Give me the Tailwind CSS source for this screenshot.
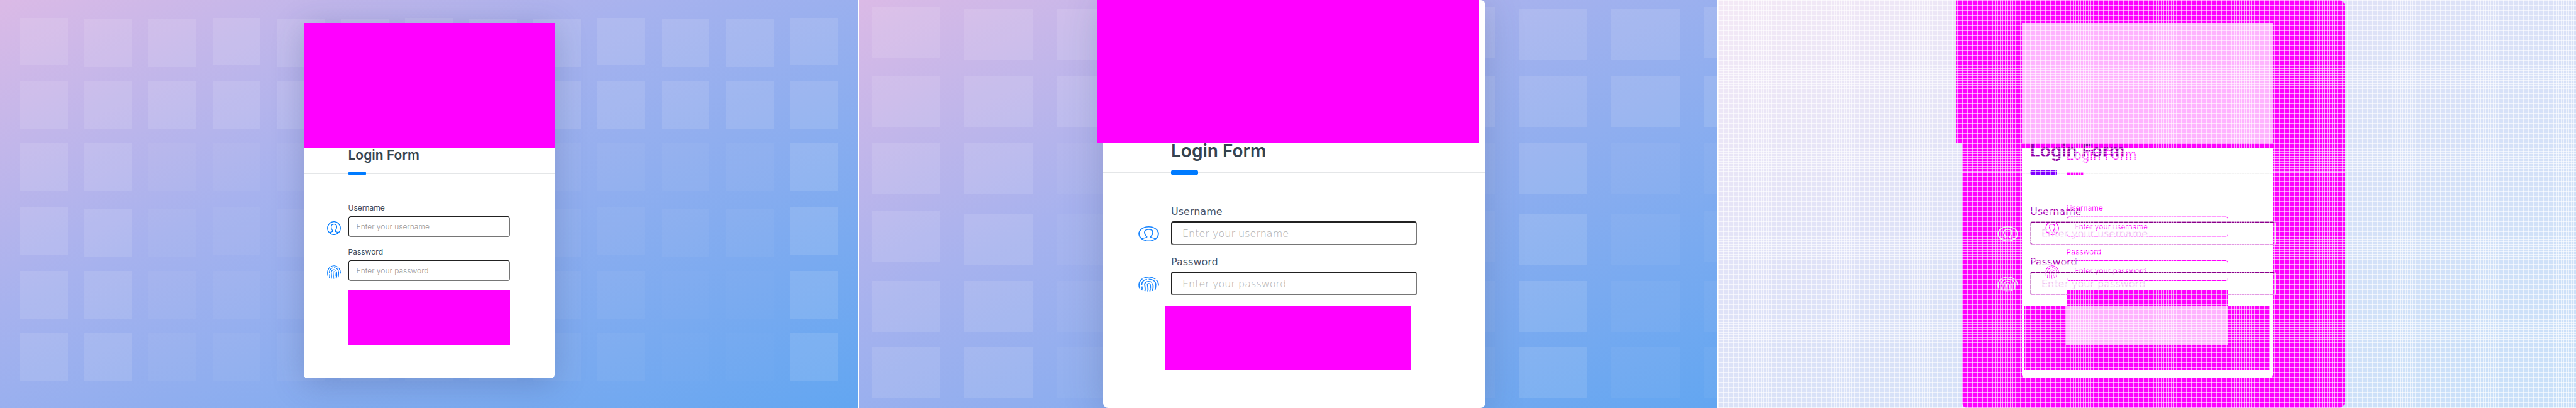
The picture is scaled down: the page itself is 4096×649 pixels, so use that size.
<!DOCTYPE html>
<html lang="en">
<head>
<meta charset="utf-8">
<title>Login Form comparison</title>
<script src="https://cdn.jsdelivr.net/npm/@tailwindcss/browser@4"></script>
</head>
<body class="bg-white font-['Inter',sans-serif]">
<svg class="hidden" aria-hidden="true">
  <symbol id="user" viewBox="0 0 30 30" preserveAspectRatio="none">
    <g fill="none" stroke="currentColor" stroke-width="1.7">
      <circle cx="15" cy="15" r="14"/>
      <path d="M5 24.8C8 22.6 12.4 23 12.4 21.4C12.4 19.8 9 18.5 9 12.2C9 8.2 11.4 6.2 15 6.2S21 8.2 21 12.2C21 18.5 17.6 19.8 17.6 21.4C17.6 23 22 22.6 25 24.8"/>
    </g>
  </symbol>
  <symbol id="finger" viewBox="0 0 30 30" preserveAspectRatio="none">
    <g fill="none" stroke="currentColor" stroke-width="1.6">
      <path d="M1.800 23C.2 16 .8 9 6 4.400"/>
      <path d="M8 3C13-.2 20 .4 24.600 5"/>
      <path d="M26 7C28.600 10 29.400 13 29 18"/>
      <path d="M5 17.500C4.600 11 7.500 6.800 12.500 5.600"/>
      <path d="M15 5.200C21.500 5.200 25.300 10 25.200 16C25.200 20 25 23 24.200 26"/>
      <path d="M5.300 19.600C5.700 22.500 5.600 25 5 27.500"/>
      <path d="M9.500 29C10.600 25 9.500 20 9.200 16C9 12 11.500 9.600 15 9.600C17 9.600 18.500 10.300 19.500 11.600"/>
      <path d="M20.600 13.400C21.600 18 21.600 24 20 28.600"/>
      <path d="M13.600 29.400C14.600 25 13.600 20 13.200 16.500C13 13 17 12.700 17.200 16C17.500 18.500 17.700 21 17.500 23.500"/>
      <path d="M17.300 25L16.700 29.400"/>
    </g>
  </symbol>
</svg>

<main class="grid h-screen grid-cols-3 gap-[2px]">

  <!-- First version -->
  <section class="relative flex items-start justify-center overflow-hidden bg-[linear-gradient(to_bottom_right,#dbbae6,#a7b2ee_38%,#62a6f1)] pt-9">
    <div data-tiles="13" class="absolute inset-0 grid grid-cols-[repeat(13,76px)] grid-rows-[101px_99px_102px_101px_99px_76px] gap-x-[26px] pt-7 pl-8"></div>
    <form class="relative w-[399px] rounded-b-md bg-white pb-[54px] shadow-[0_8px_50px_rgba(50,60,110,0.25)]">
      <div class="h-[199px] bg-[#ff00ff]"></div>
      <header class="relative border-b border-[#e4e6e8] pb-4 pl-[71px]">
        <h1 class="text-[21px] leading-6 font-semibold text-[#35434f]">Login Form</h1>
        <span class="absolute -bottom-1 h-1.5 w-7 rounded-xs bg-[#007bff]"></span>
      </header>
      <div class="flex flex-col gap-4 pt-[47px] pr-[71px] pl-[37px]">
        <div class="grid grid-cols-[22px_1fr] gap-x-3 gap-y-[5px]">
          <label for="u1" class="col-start-2 text-xs leading-4 text-[#404b5e]">Username</label>
          <svg class="col-start-1 mt-2 size-[22px] text-[#007bff]"><use href="#user"/></svg>
          <input id="u1" type="text" placeholder="Enter your username" class="h-[33px] w-full rounded border border-t-[#212121] border-r-[#767676] border-b-[#767676] border-l-[#212121] px-3 text-xs font-light placeholder:text-[#999]">
        </div>
        <div class="grid grid-cols-[22px_1fr] gap-x-3 gap-y-[5px]">
          <label for="p1" class="col-start-2 text-xs leading-4 text-[#404b5e]">Password</label>
          <svg class="col-start-1 mt-2 size-[22px] text-[#007bff]"><use href="#finger"/></svg>
          <input id="p1" type="password" placeholder="Enter your password" class="h-[33px] w-full rounded border border-t-[#212121] border-r-[#767676] border-b-[#767676] border-l-[#212121] px-3 text-xs font-light placeholder:text-[#999]">
        </div>
      </div>
      <div class="mx-[71px] mt-3.5 h-[87px] bg-[#ff00ff]"></div>
    </form>
  </section>

  <!-- Second version -->
  <section class="relative flex items-stretch justify-center overflow-hidden bg-[linear-gradient(to_bottom_right,#dbbae6,#a7b2ee_38%,#62a6f1)] pl-5">
    <div data-tiles="10" class="absolute inset-0 grid grid-cols-[repeat(10,109px)] grid-rows-[110px_106px_109px_111px_105px_81px] gap-x-[38px] pt-[11px] pl-5"></div>
    <form class="relative w-[608px] rounded-lg bg-white font-['DejaVu_Sans',sans-serif] shadow-[0_8px_60px_rgba(50,60,110,0.25)]">
      <div class="mr-2.5 -ml-2.5 h-[228px] bg-[#ff00ff]"></div>
      <header class="relative border-b border-[#e4e6e8] pb-[22px] pl-[108px]">
        <h1 class="font-['Inter',sans-serif] text-[28px] leading-6 font-semibold text-[#35434f]">Login Form</h1>
        <span class="absolute -bottom-1 h-[7px] w-[43px] rounded-xs bg-[#007bff]"></span>
      </header>
      <div class="flex flex-col gap-[17px] pt-[52px] pr-[109px] pl-14">
        <div class="grid grid-cols-[33px_1fr] gap-x-[19px] gap-y-[5px]">
          <label for="u2" class="col-start-2 text-base leading-5 text-[#4a5568]">Username</label>
          <svg class="col-start-1 mt-2 h-6 w-[33px] text-[#1a86ff]"><use href="#user"/></svg>
          <input id="u2" type="text" placeholder="Enter your username" class="h-[38px] w-full rounded border-2 border-t-[#212121] border-r-[#767676] border-b-[#767676] border-l-[#212121] px-4 text-base font-light placeholder:text-[#b0b0b0]">
        </div>
        <div class="grid grid-cols-[33px_1fr] gap-x-[19px] gap-y-[5px]">
          <label for="p2" class="col-start-2 text-base leading-5 text-[#4a5568]">Password</label>
          <svg class="col-start-1 mt-2 h-6 w-[33px] text-[#1a86ff]"><use href="#finger"/></svg>
          <input id="p2" type="password" placeholder="Enter your password" class="h-[38px] w-full rounded border-2 border-t-[#212121] border-r-[#767676] border-b-[#767676] border-l-[#212121] px-4 text-base font-light placeholder:text-[#b0b0b0]">
        </div>
      </div>
      <div class="mt-[17px] mr-[119px] ml-[98px] h-[101px] bg-[#ff00ff]"></div>
    </form>
  </section>

  <!-- Difference of the two versions -->
  <section class="relative overflow-hidden bg-[linear-gradient(to_bottom_right,#f4e9f6,#dfe2f7_38%,#c8e0f9)]">
    <div class="absolute inset-0 flex justify-center pl-5">
      <div class="w-[608px] rounded-lg bg-[#ff00ff]">
        <div class="mr-2.5 -ml-2.5 h-[228px] border-r border-b border-[#ffb3ff] bg-[#ff00ff]"></div>
      </div>
    </div>

    <div class="absolute inset-0 flex items-start justify-center pt-9">
      <form class="w-[399px] rounded-b-md bg-white pb-[54px]">
        <div class="h-48 bg-[#ffb3ff]"></div>
        <div class="h-[7px] bg-[#ff00ff]"></div>
        <header class="relative border-b border-[#f3f3f3] pb-4 pl-[71px]">
          <h2 class="text-[21px] leading-6 text-[#ff00ff]">Login Form</h2>
          <span class="absolute -bottom-1 h-1.5 w-7 bg-[#ff00ff]"></span>
        </header>
        <div class="flex flex-col gap-4 pt-[47px] pr-[71px] pl-[37px]">
          <div class="grid grid-cols-[22px_1fr] gap-x-3 gap-y-[5px]">
            <label for="u3" class="col-start-2 text-xs leading-4 text-[#ff00ff]">Username</label>
            <svg class="col-start-1 mt-2 size-[22px] text-[#ff00ff]"><use href="#user"/></svg>
            <input id="u3" type="text" placeholder="Enter your username" class="h-[33px] w-full rounded border border-[#ff00ff] px-3 text-xs font-light placeholder:text-[#ff00ff]">
          </div>
          <div class="grid grid-cols-[22px_1fr] gap-x-3 gap-y-[5px]">
            <label for="p3" class="col-start-2 text-xs leading-4 text-[#ff00ff]">Password</label>
            <svg class="col-start-1 mt-2 size-[22px] text-[#ff00ff]"><use href="#finger"/></svg>
            <input id="p3" type="password" placeholder="Enter your password" class="h-[33px] w-full rounded border border-[#ff00ff] px-3 text-xs font-light placeholder:text-[#ff00ff]">
          </div>
        </div>
        <div class="mx-[71px] mt-3.5 h-[87px] bg-[#ff00ff]"></div>
      </form>
    </div>

    <div class="absolute inset-0 flex justify-center pl-5">
      <form class="w-[608px] pt-[228px] font-['DejaVu_Sans',sans-serif]">
        <header class="relative border-b border-white/60 pb-[22px] pl-[108px]">
          <h2 class="font-['Inter',sans-serif] text-[28px] leading-6 font-semibold text-[#9000a8]">Login Form</h2>
          <span class="absolute -bottom-1 h-[7px] w-[43px] rounded-xs bg-[#8000ff]"></span>
        </header>
        <div class="flex flex-col gap-[17px] pt-[52px] pr-[109px] pl-14">
          <div class="grid grid-cols-[33px_1fr] gap-x-[19px] gap-y-[5px]">
            <label for="u4" class="col-start-2 text-base leading-5 text-[#a800b0]">Username</label>
            <svg class="col-start-1 mt-2 h-6 w-[33px] text-[#e6e4ee]"><use href="#user"/></svg>
            <input id="u4" type="text" placeholder="Enter your username" class="h-[38px] w-full rounded border-2 border-t-[#8b008b] border-r-[#e8e8e8] border-b-[#b800b8] border-l-[#8b008b] px-4 text-base placeholder:text-[#f0c4f2]">
          </div>
          <div class="grid grid-cols-[33px_1fr] gap-x-[19px] gap-y-[5px]">
            <label for="p4" class="col-start-2 text-base leading-5 text-[#a800b0]">Password</label>
            <svg class="col-start-1 mt-2 h-6 w-[33px] text-[#e6e4ee]"><use href="#finger"/></svg>
            <input id="p4" type="password" placeholder="Enter your password" class="h-[38px] w-full rounded border-2 border-t-[#8b008b] border-r-[#e8e8e8] border-b-[#b800b8] border-l-[#8b008b] px-4 text-base placeholder:text-[#f0c4f2]">
          </div>
        </div>
        <div class="mt-[17px] mr-[119px] ml-[98px] h-[101px] bg-[#ff00ff] px-[67px]">
          <div class="h-[61px] bg-[#ffb3ff]"></div>
        </div>
      </form>
    </div>

    <!-- White mesh over the whole difference -->
    <div class="pointer-events-none absolute inset-0 bg-[linear-gradient(to_right,rgba(255,255,255,0.6)_1px,transparent_1px),linear-gradient(to_bottom,rgba(255,255,255,0.6)_1px,transparent_1px)] bg-[size:4px_4px]"></div>
  </section>
</main>

<script>
  // Translucent background tiles, six rows per panel
  document.querySelectorAll('[data-tiles]').forEach(function (grid) {
    var cols = Number(grid.dataset.tiles);
    for (var r = 0; r < 6; r++) {
      for (var c = 0; c < cols; c++) {
        var tile = document.createElement('div');
        var low = r % 3 === 0 && c % 3 !== 0;
        tile.className = cols === 13
          ? (low ? 'mt-[3px] h-[76px] bg-white' : 'h-[76px] bg-white')
          : (low ? 'mt-1 h-[81px] bg-white' : 'h-[81px] bg-white');
        var bright = r < 2 || c < 2 || c === 12 || (cols === 10 && c === 7);
        var faint = cols === 13 && r > 3 && c > 9;
        tile.style.opacity = bright ? 0.11 : faint ? 0.02 : 0.045;
        grid.appendChild(tile);
      }
    }
  });
</script>
</body>
</html>
